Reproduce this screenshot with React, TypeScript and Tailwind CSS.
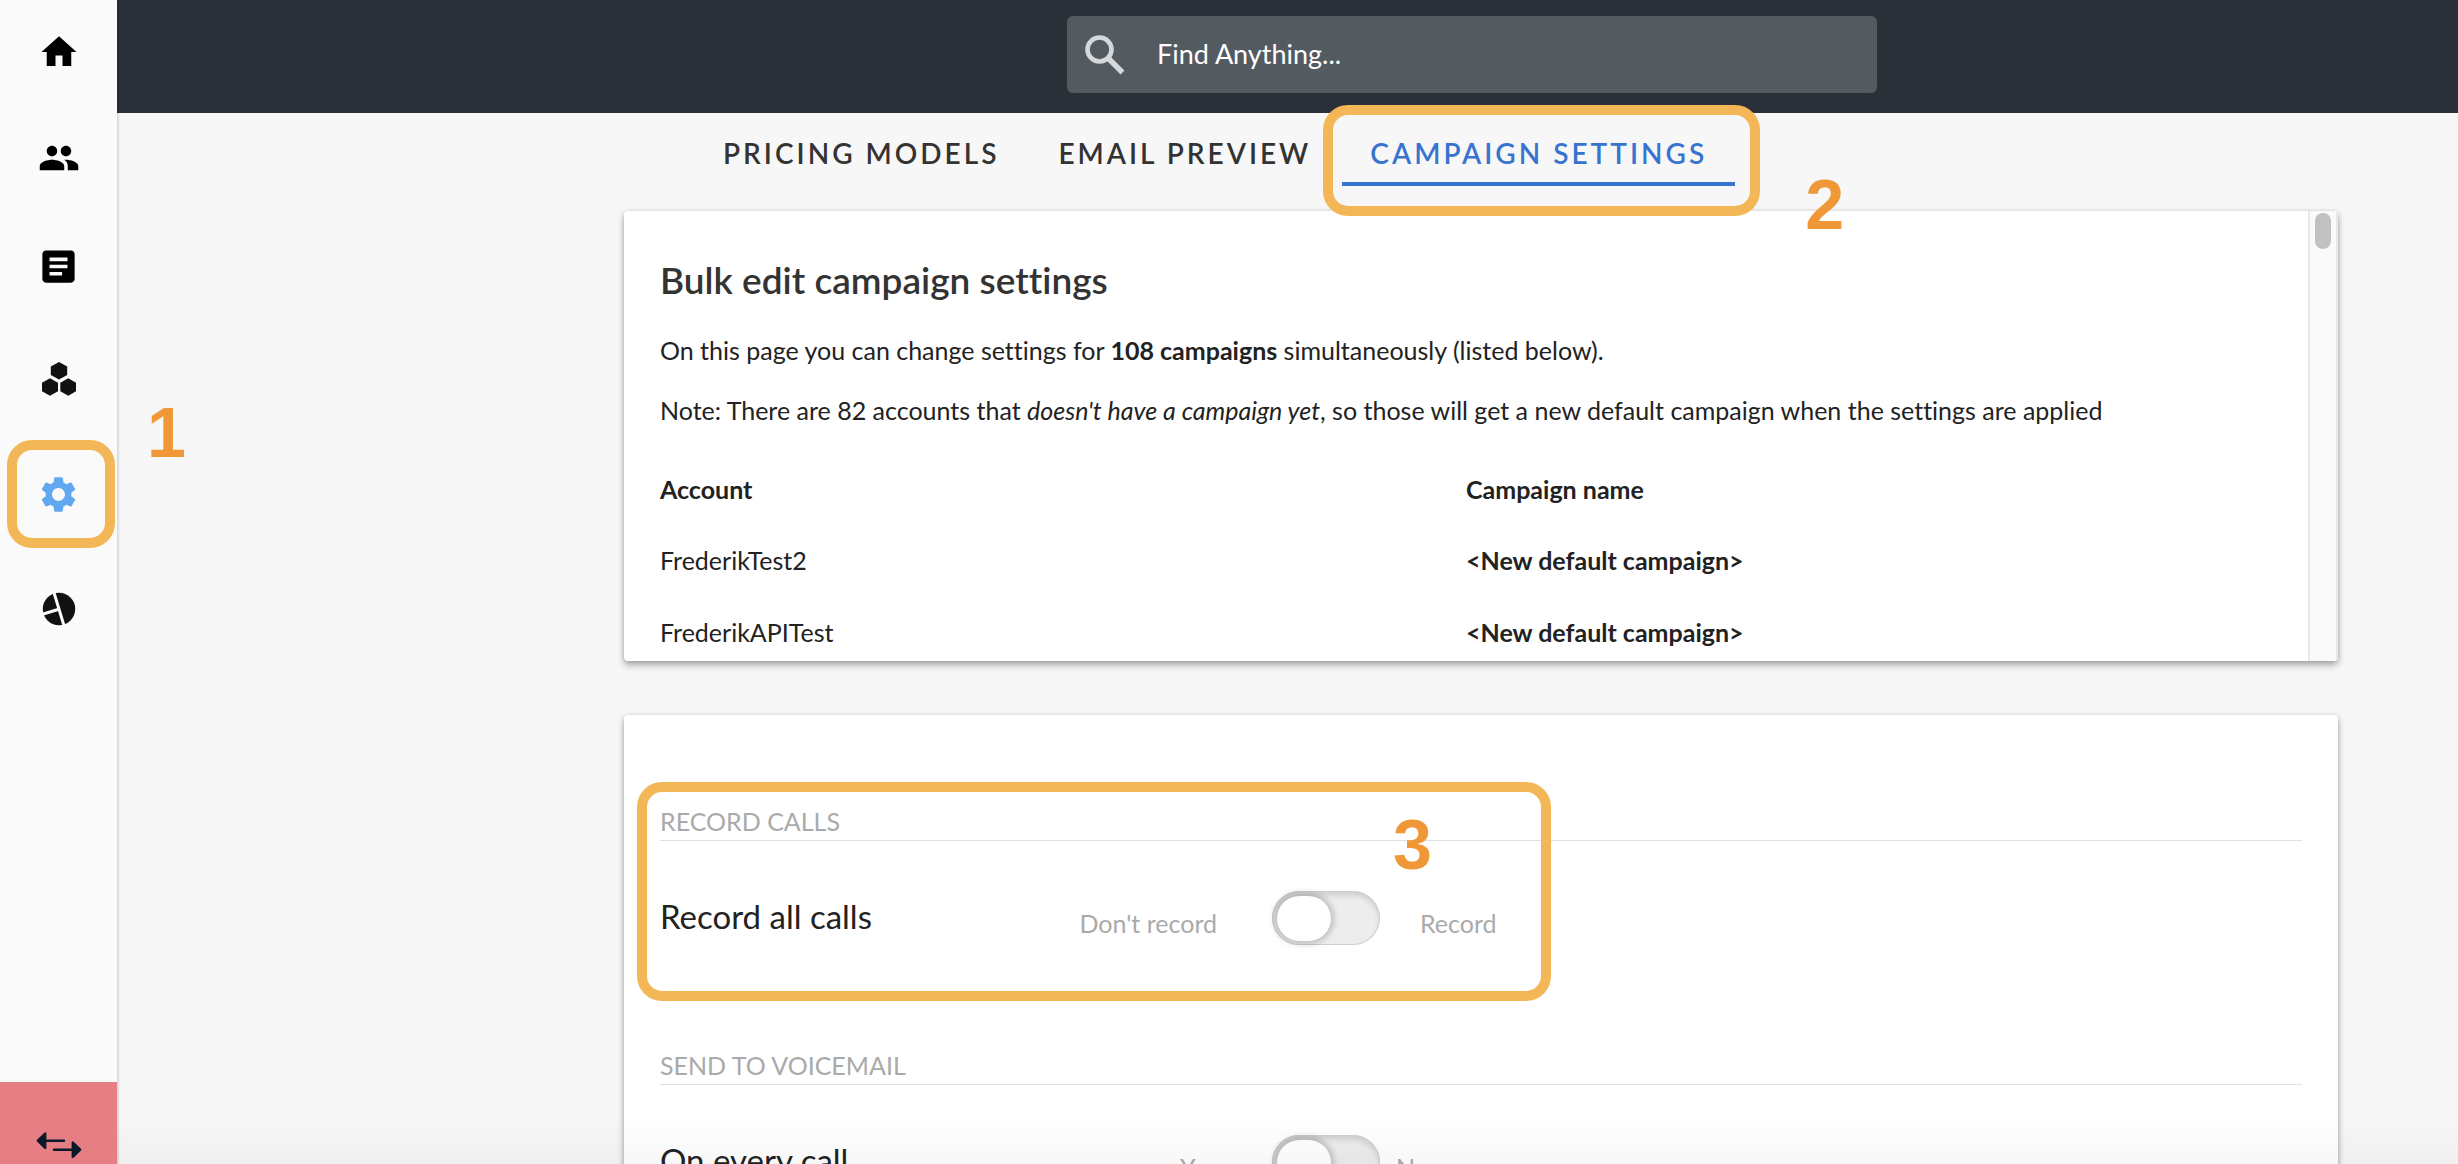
import type { ReactNode } from 'react'
import { MdArticle, MdHome, MdPeople, MdSettings } from 'react-icons/md'

const HexagonsIcon = () => (
  <svg viewBox="0 0 34 34" className="size-[34px]" fill="#111111" aria-hidden="true">
    <path d="M17 0l8.200 4.600v8.400L17 17.400 8.800 13V4.600z" />
    <path d="M8 16.200l8 4.500v8.600L8 33.800 0 29.300v-8.600z" />
    <path d="M26.300 16.200l7.700 4.500v8.600l-7.700 4.500-8-4.500v-8.600z" />
  </svg>
)

const PieIcon = () => (
  <svg viewBox="0 0 34 34" className="size-[34px]" aria-hidden="true">
    <circle cx="17" cy="17" r="16.200" fill="#111111" />
    <path d="M11.500-1L22.700 36M-1 22.700L16.800 17.300" stroke="#fafafa" strokeWidth="3" />
  </svg>
)

const SwapIcon = () => (
  <svg viewBox="0 0 46 28" className="h-[28px] w-[46px]" fill="#0b1a2b" stroke="#0b1a2b" strokeWidth="2.400" strokeLinecap="round" strokeLinejoin="round" aria-hidden="true">
    <path d="M9 9.700H28" />
    <path d="M9.200 2.500L1.800 9.700l7.400 7.200z" />
    <path d="M18 18.700h19" />
    <path d="M36.800 11.500l7.400 7.200-7.400 7.200z" />
  </svg>
)

const SearchIcon = () => (
  <svg viewBox="0 0 40 40" className="size-10 shrink-0" fill="none" stroke="#d6d9db" aria-hidden="true">
    <circle cx="14.500" cy="14.500" r="12" strokeWidth="4.600" />
    <path d="M23.500 23.500l14 14" strokeWidth="5.500" />
  </svg>
)

const navItems: { label: string; icon: ReactNode; spacing: string; active?: boolean }[] = [
  { label: 'Home', icon: <MdHome className="size-[42px]" />, spacing: 'mt-[31px]' },
  { label: 'Users', icon: <MdPeople className="size-[42px]" />, spacing: 'mt-16' },
  { label: 'Articles', icon: <MdArticle className="size-[43px]" />, spacing: 'mt-[66px]' },
  { label: 'Groups', icon: <HexagonsIcon />, spacing: 'mt-[71px]' },
  { label: 'Settings', icon: <MdSettings className="size-[43px] text-[#62a8f0]" />, spacing: 'mt-[73px]', active: true },
  { label: 'Reports', icon: <PieIcon />, spacing: 'mt-[73px]' },
]

const tabs = [
  { label: 'PRICING MODELS', active: false },
  { label: 'EMAIL PREVIEW', active: false },
  { label: 'CAMPAIGN SETTINGS', active: true },
]

const accounts = [
  { account: 'FrederikTest2', campaign: '<New default campaign>' },
  { account: 'FrederikAPITest', campaign: '<New default campaign>' },
]

const settings = [
  { id: 'record', heading: 'RECORD CALLS', label: 'Record all calls', off: "Don't record", on: 'Record', onSpacing: 'ml-10', step: '3' },
  { id: 'voicemail', heading: 'SEND TO VOICEMAIL', label: 'On every call', off: 'Yes', on: 'No', onSpacing: 'ml-4' },
]

const Highlight = ({ className }: { className: string }) => (
  <span className={`pointer-events-none absolute z-10 rounded-[25px] border-10 border-[#f3b757] ${className}`} />
)

const Step = ({ className, children }: { className: string; children: ReactNode }) => (
  <span
    className={`pointer-events-none absolute z-10 font-['Liberation_Sans',Arial,sans-serif] text-[70px] leading-[70px] font-bold tracking-normal text-[#f09837] ${className}`}
  >
    {children}
  </span>
)

function Sidebar() {
  return (
    <aside className="relative z-20 flex w-[117px] shrink-0 flex-col bg-[#fafafa] shadow-[1px_0_3px_rgba(0,0,0,0.2)]">
      <nav className="flex flex-col">
        {navItems.map((item) => (
          <a
            key={item.label}
            href="#"
            aria-label={item.label}
            className={`relative flex h-[42px] items-center justify-center text-black ${item.spacing}`}
          >
            {item.icon}
            {item.active && <Highlight className="-top-[33px] left-[7px] size-[108px]" />}
            {item.active && <Step className="-top-[75px] left-[147px]">1</Step>}
          </a>
        ))}
      </nav>
      <button type="button" aria-label="Switch account" className="mt-auto flex h-[82px] items-end justify-center bg-[#e57f83] pb-[5px]">
        <SwapIcon />
      </button>
    </aside>
  )
}

function Header() {
  return (
    <header className="flex h-[113px] shrink-0 bg-[#2a3038] pt-4 pr-[120px] pl-[950px]">
      <label className="flex h-[77px] w-[810px] items-center gap-8 rounded-md bg-[#535a60] pl-[18px]">
        <SearchIcon />
        <input
          type="text"
          aria-label="Search"
          placeholder="Find Anything..."
          className="min-w-0 flex-1 bg-transparent text-[27px] text-white outline-none placeholder:text-white"
        />
      </label>
    </header>
  )
}

function Tabs() {
  return (
    <div role="tablist" className="flex h-[98px] shrink-0 items-start gap-[3px] pl-[71px]">
      {tabs.map((tab) => (
        <button
          key={tab.label}
          type="button"
          role="tab"
          aria-selected={tab.active}
          className={`relative border-b-4 px-7 pt-5 pb-[9px] text-[28px] leading-10 font-semibold tracking-[3px] whitespace-nowrap ${
            tab.active ? 'border-[#3874cf] text-[#3874cf]' : 'border-transparent text-[#333333]'
          }`}
        >
          {tab.label}
          {tab.active && <Highlight className="-top-2 -right-[25px] -left-[19px] h-[111px]" />}
          {tab.active && <Step className="top-[57px] -right-[109px]">2</Step>}
        </button>
      ))}
    </div>
  )
}

function Toggle({ id }: { id: string }) {
  return (
    <span className="relative ml-[55px] h-[54px] w-[108px] shrink-0">
      <input
        id={id}
        type="checkbox"
        role="switch"
        className="peer size-full cursor-pointer appearance-none rounded-full bg-[#ededed] shadow-[inset_0_0_0_1px_#cfcfcf,inset_0_4px_6px_rgba(0,0,0,0.14)] checked:bg-[#62a8f0]"
      />
      <span className="pointer-events-none absolute top-[5px] left-[5px] h-[45px] w-[54px] rounded-full bg-white shadow-[0_0_6px_3px_rgba(0,0,0,0.2)] peer-checked:left-[49px]" />
    </span>
  )
}

function CampaignList() {
  return (
    <section className="flex h-[450px] shrink-0 overflow-hidden rounded bg-white shadow-[0_4px_7px_rgba(0,0,0,0.32),0_0_4px_rgba(0,0,0,0.12)]">
      <div className="min-w-0 flex-1 px-9 pt-[45px]">
        <h1 className="text-[37px] leading-[48px] font-semibold text-[#333333]">Bulk edit campaign settings</h1>
        <p className="mt-[30px] text-[25px] leading-8">
          On this page you can change settings for <b>108 campaigns</b> simultaneously (listed below).
        </p>
        <p className="mt-7 text-[25px] leading-8">
          Note: There are 82 accounts that <i>doesn't have a campaign yet</i>, so those will get a new default campaign when the
          settings are applied
        </p>
        <table className="mt-[27px] w-full table-fixed text-left text-[25px] leading-8">
          <thead>
            <tr className="h-[71px]">
              <th>Account</th>
              <th>Campaign name</th>
            </tr>
          </thead>
          <tbody>
            {accounts.map((row) => (
              <tr key={row.account} className="h-[72px]">
                <td>{row.account}</td>
                <td className="font-bold">{row.campaign}</td>
              </tr>
            ))}
          </tbody>
        </table>
      </div>
      <div className="flex w-[30px] justify-center border-x-2 border-[#e8e8e8] bg-[#fafafa] pt-[2px]">
        <div className="h-9 w-4 rounded-full bg-[#c1c1c1]" />
      </div>
    </section>
  )
}

function CallSettings() {
  return (
    <section className="mt-[54px] flex-1 rounded-t bg-white px-9 shadow-[0_4px_7px_rgba(0,0,0,0.32),0_0_4px_rgba(0,0,0,0.12)]">
      <div className="pt-[90px]">
        {settings.map((item) => (
          <div key={item.id} className="relative h-[244px]">
            <h2 className="border-b border-[#e0e0e0] pb-[3px] text-[25px] leading-8 text-[#aaaaaa]">{item.heading}</h2>
            <div className="flex items-center pt-[50px]">
              <label htmlFor={item.id} className="w-[357px] pb-1 text-[33px] leading-[50px]">
                {item.label}
              </label>
              <span className="w-[200px] pt-[10px] text-right text-[25px] leading-8 text-[#aaaaaa]">{item.off}</span>
              <Toggle id={item.id} />
              <span className={`pt-[10px] text-[25px] leading-8 text-[#aaaaaa] ${item.onSpacing}`}>{item.on}</span>
            </div>
            {item.step && <Highlight className="-top-[23px] -left-[23px] h-[219px] w-[914px]" />}
            {item.step && <Step className="top-[5px] left-[733px]">{item.step}</Step>}
          </div>
        ))}
      </div>
    </section>
  )
}

export default function App() {
  return (
    <div className="relative flex h-screen overflow-hidden bg-[#f7f7f7] font-[Lato,'Open_Sans',sans-serif] text-[#222222] [font-variant-ligatures:none]">
      <Sidebar />
      <div className="flex min-w-0 flex-1 flex-col">
        <Header />
        <main className="flex min-h-0 flex-1 flex-col pr-[120px] pl-[507px]">
          <Tabs />
          <CampaignList />
          <CallSettings />
        </main>
      </div>
      <div className="pointer-events-none absolute inset-x-0 bottom-0 h-12 bg-linear-to-b from-transparent to-black/3" />
    </div>
  )
}
